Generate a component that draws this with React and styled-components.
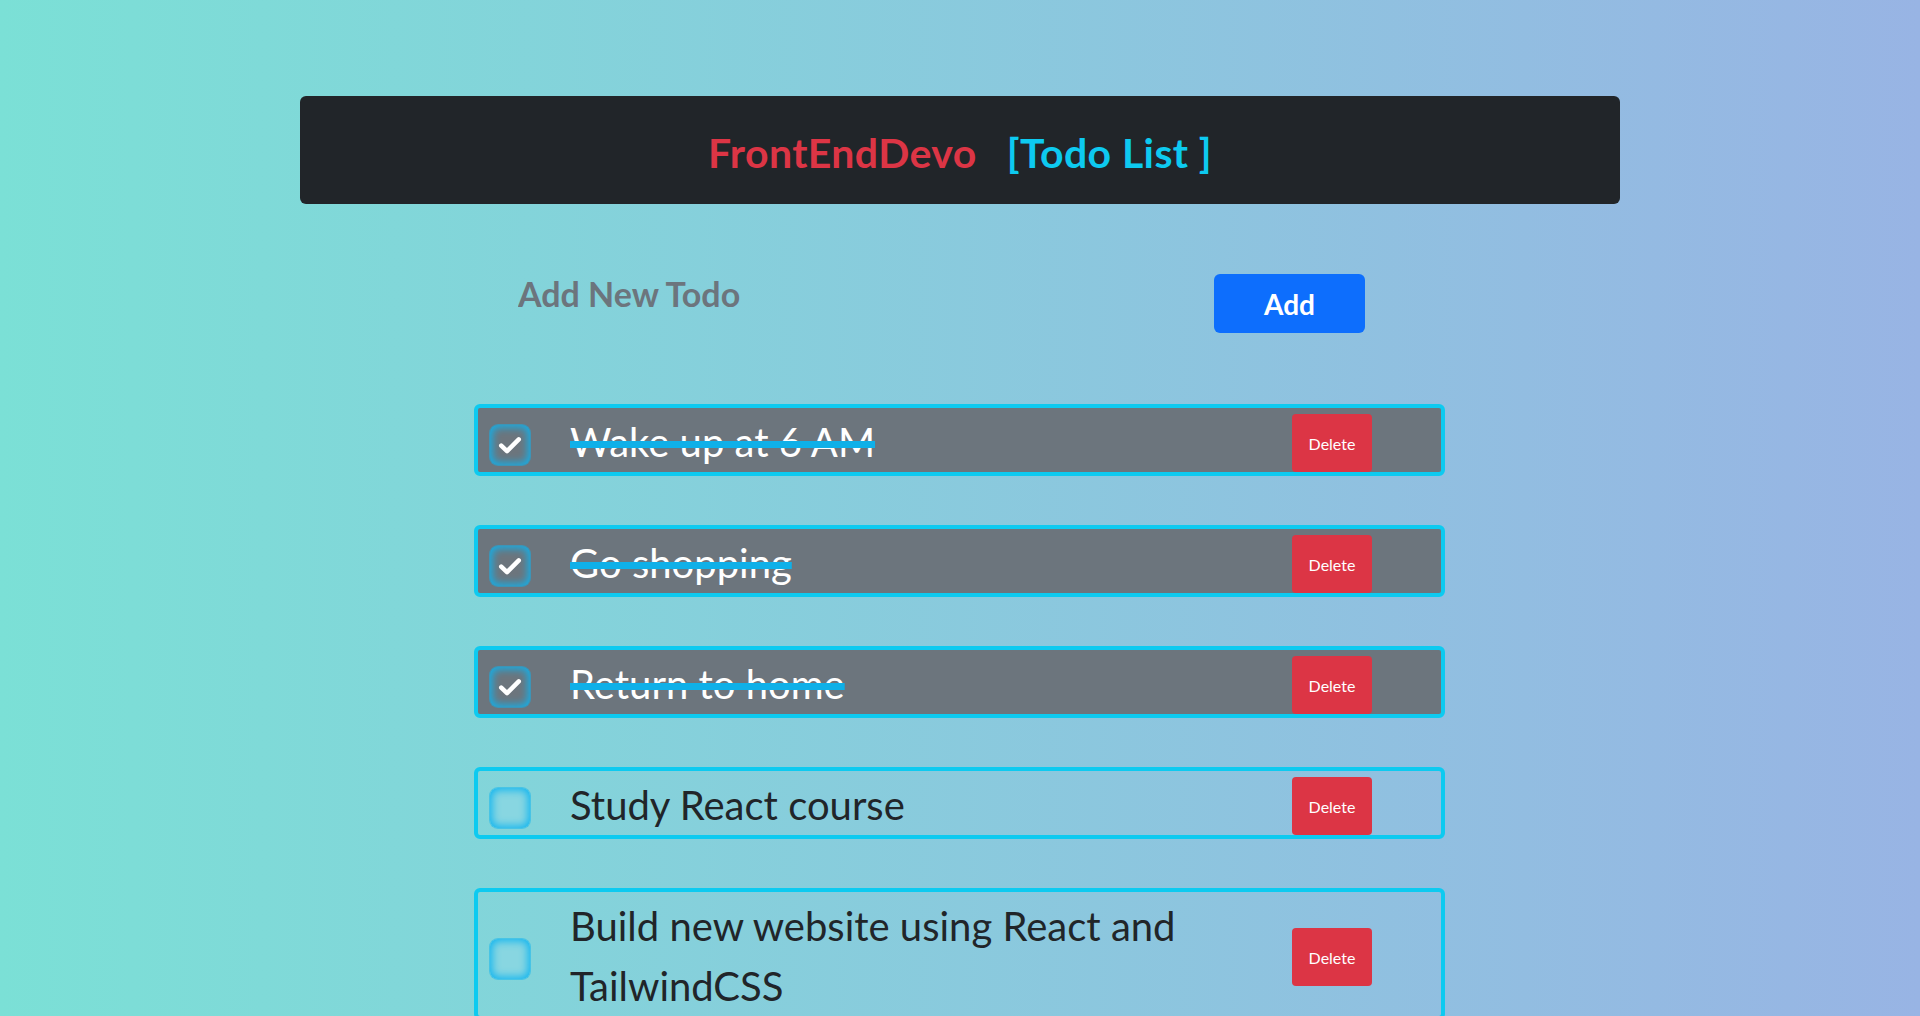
import { useState } from "react";
import styled, { createGlobalStyle } from "styled-components";

const GlobalStyle = createGlobalStyle`
  html, body {
    margin: 0;
    padding: 0;
  }
  body {
    min-height: 100vh;
    font-family: Lato, "Noto Sans", sans-serif;
    background: linear-gradient(90deg, #7be0d6 0%, #98b4e4 100%);
    background-attachment: fixed;
    color: #212529;
  }
  * {
    box-sizing: border-box;
  }
`;

const initialTodos = [
  { id: 1, text: "Wake up at 6 AM", done: true },
  { id: 2, text: "Go shopping", done: true },
  { id: 3, text: "Return to home", done: true },
  { id: 4, text: "Study React course", done: false },
  { id: 5, text: "Build new website using React and TailwindCSS", done: false },
];

const App = () => {
  const [todos, setTodos] = useState(initialTodos);
  const [value, setValue] = useState("");

  const toggle = (id) =>
    setTodos(todos.map((t) => (t.id === id ? { ...t, done: !t.done } : t)));
  const remove = (id) => setTodos(todos.filter((t) => t.id !== id));
  const add = () => {
    if (!value.trim()) return;
    setTodos([...todos, { id: Date.now(), text: value, done: false }]);
    setValue("");
  };

  return (
    <>
      <GlobalStyle />
      <Container>
        <Header>
          <Brand>FrontEndDevo</Brand>
          <Subtitle>[Todo List ]</Subtitle>
        </Header>
        <Form>
          <NewInput
            placeholder="Add New Todo"
            value={value}
            onChange={(e) => setValue(e.target.value)}
          />
          <AddButton onClick={add}>Add</AddButton>
        </Form>
        <List>
          {todos.map((t) => (
            <Row key={t.id} $done={t.done}>
              <Cell>
                <Check $done={t.done} onClick={() => toggle(t.id)}>
                  {t.done && (
                    <svg viewBox="0 0 24 24" width="30" height="30">
                      <path
                        d="M5 12.5l4.6 4.4L19 7.5"
                        fill="none"
                        stroke="#fff"
                        strokeWidth="3.6"
                        strokeLinecap="round"
                        strokeLinejoin="round"
                      />
                    </svg>
                  )}
                </Check>
              </Cell>
              <TodoText $done={t.done}>{t.text}</TodoText>
              <Cell>
                <DeleteButton onClick={() => remove(t.id)}>Delete</DeleteButton>
              </Cell>
            </Row>
          ))}
        </List>
      </Container>
    </>
  );
};

export default App;

const Container = styled.div`
  width: 1320px;
  margin: 0 auto;
  padding-top: 96px;
`;

const Header = styled.div`
  height: 108px;
  background-color: #212529;
  border-radius: 6px;
  display: flex;
  align-items: center;
  justify-content: center;
  gap: 30px;
  font-size: 41px;
  letter-spacing: 0.4px;
  font-weight: 700;
  padding-top: 4px;
`;

const Brand = styled.span`
  color: #dc3545;
`;

const Subtitle = styled.span`
  color: #0dcaf0;
`;

const Form = styled.div`
  display: flex;
  align-items: flex-start;
  margin-top: 70px;
  padding-left: 206px;
`;

const NewInput = styled.input`
  width: 708px;
  background: transparent;
  border: none;
  outline: none;
  padding: 0 12px;
  font-family: inherit;
  font-size: 34px;
  font-weight: 700;
  line-height: 40px;
  color: #212529;
  &::placeholder {
    color: #6c757d;
  }
`;

const AddButton = styled.button`
  width: 151px;
  height: 59px;
  border: none;
  border-radius: 6px;
  background-color: #0d6efd;
  color: #fff;
  font-family: inherit;
  font-size: 28px;
  font-weight: 700;
  cursor: pointer;
`;

const List = styled.div`
  width: 971px;
  margin: 71px 0 0 174px;
  display: flex;
  flex-direction: column;
  gap: 49px;
`;

const Row = styled.div`
  display: grid;
  grid-template-columns: 80px 722px 1fr;
  align-items: center;
  border: 4px solid #0dcaf0;
  border-radius: 6px;
  padding: 4px 0 0;
  background-color: ${(p) => (p.$done ? "#6c757d" : "transparent")};
`;

const Cell = styled.div`
  padding: 0 12px;
  display: flex;
  align-items: center;
`;

const Check = styled.div`
  width: 40px;
  height: 40px;
  margin-top: 6px;
  border-radius: 8px;
  display: flex;
  align-items: center;
  justify-content: center;
  cursor: pointer;
  background-color: ${(p) => (p.$done ? "#6c757d" : "rgba(140, 215, 230, 0.6)")};
  box-shadow: inset 0 0 8px 2px #0db4f0, 0 0 0 1px rgba(13, 180, 240, 0.5);
`;

const TodoText = styled.div`
  padding: 0 12px;
  font-size: 40px;
  line-height: 60px;
  color: ${(p) => (p.$done ? "#fff" : "#212529")};
  text-decoration: ${(p) => (p.$done ? "line-through" : "none")};
  text-decoration-color: #0fb0e8;
  text-decoration-thickness: 7px;
`;

const DeleteButton = styled.button`
  width: 80px;
  height: 58px;
  margin-top: 2px;
  border: none;
  border-radius: 4px;
  background-color: #dc3545;
  color: #fff;
  font-family: inherit;
  font-size: 16px;
  cursor: pointer;
`;
